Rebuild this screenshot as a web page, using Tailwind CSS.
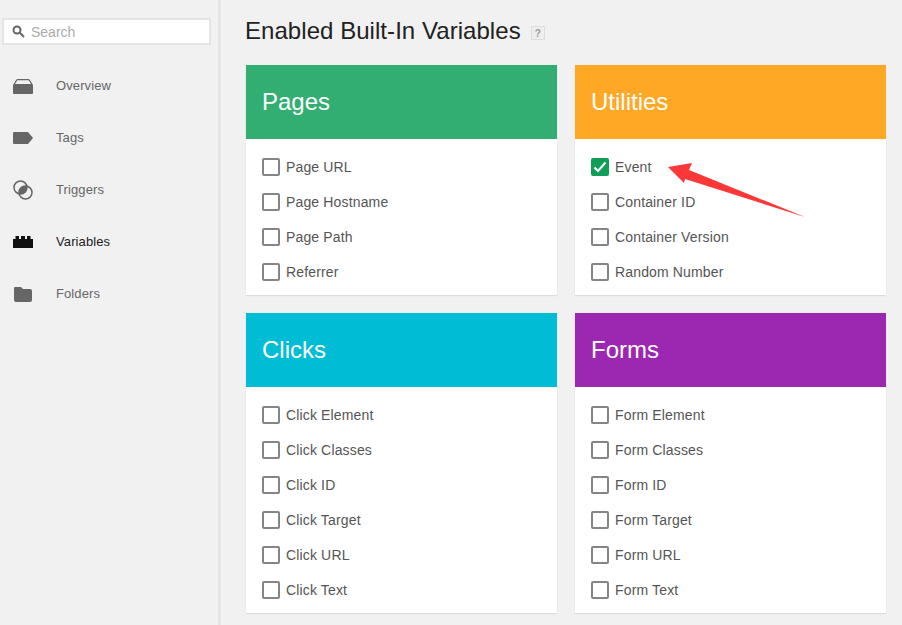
<!DOCTYPE html>
<html lang="en">
<head>
    <meta charset="UTF-8" />
    <title>Enabled Built-In Variables</title>
    <script src="https://cdn.jsdelivr.net/npm/@tailwindcss/browser@4"></script>
</head>
<body class="bg-[#f1f1f1] font-['Liberation_Sans',Arial,sans-serif] w-[902px] h-[625px] overflow-hidden relative">
    <div class="flex h-[625px]">
        <!-- sidebar -->
        <aside class="w-[221px] shrink-0 border-r-[3px] border-[#e5e5e5] pt-[18px] pl-[2px] pr-[7px]">
            <div class="h-[27px] bg-white border-2 border-[#e4e4e4] flex items-center pl-[8px] gap-[6px]">
                <svg width="13" height="13" viewBox="0 0 13 13" fill="none" stroke="#666" stroke-width="2"><circle cx="5" cy="5" r="3.5"/><path d="M7.8 7.8 12 12"/></svg>
                <span class="text-[14px] text-[#aaa] pt-px">Search</span>
            </div>
            <nav class="mt-[15px] -ml-[2px] text-[13px] text-[#666] tracking-[0.1px]">
                <a class="flex items-center h-[52px]">
                    <svg class="ml-[13px] mr-[23px]" width="20" height="15" viewBox="0 0 20 15"><path fill="#666" d="M0 6 3 1Q3.500 0 5 0H15Q16.500 0 17 1L20 6V14Q20 15 19 15H1Q0 15 0 14Z"/><path fill="#f1f1f1" d="M2 5 4.300 1.300H15.700L18 5Z"/></svg>
                    Overview
                </a>
                <a class="flex items-center h-[52px]">
                    <svg class="ml-[13px] mr-[23px]" width="20" height="12" viewBox="0 0 20 12"><path fill="#666" d="M0 1Q0 0 1 0H15L20 6 15 12H1Q0 12 0 11Z"/></svg>
                    Tags
                </a>
                <a class="flex items-center h-[52px]">
                    <svg class="ml-[13px] mr-[23px]" width="20" height="20" viewBox="0 0 20 20" fill="none" stroke="#666" stroke-width="1.500">
                        <clipPath id="lens"><circle cx="7.500" cy="7.500" r="6.500"/></clipPath>
                        <circle cx="12.500" cy="12.500" r="6.500" fill="#666" stroke="none" clip-path="url(#lens)"/>
                        <circle cx="7.500" cy="7.500" r="6.500"/>
                        <circle cx="12.500" cy="12.500" r="6.500"/>
                    </svg>
                    Triggers
                </a>
                <a class="flex items-center h-[52px] text-[#222]">
                    <svg class="ml-[13px] mr-[23px]" width="20" height="12" viewBox="0 0 20 12"><path fill="#111" d="M0 12V3H2.500V0H6V3H8V0H12V3H14V0H17.500V3H20V12Z"/></svg>
                    Variables
                </a>
                <a class="flex items-center h-[52px]">
                    <svg class="ml-[14px] mr-[24px]" width="18" height="15" viewBox="0 0 18 15"><path fill="#666" d="M1 0H7L9 2H16Q18 2 18 4V13Q18 15 16 15H2Q0 15 0 13V1Q0 0 1 0Z"/></svg>
                    Folders
                </a>
            </nav>
        </aside>

        <!-- main -->
        <main class="flex-1 pl-[25px] pr-[16px]">
            <div class="h-[65px] flex items-center gap-[10px] pb-[4px] -ml-px">
                <h1 class="text-[24px] text-[#212121] tracking-[0.05px]">Enabled Built-In Variables</h1>
                <span class="w-[14px] h-[14px] mt-[5px] border border-[#ddd] bg-[#eee] text-[10px] font-bold text-[#999] flex items-center justify-center">?</span>
            </div>
            <div class="grid grid-cols-[311px_311px] gap-x-[18px] gap-y-[18px]">
                <section class="bg-white shadow-[0_1px_1px_#dcdcdc,0_0_1px_#e0e0e0] h-[230px]">
                    <h2 class="h-[74px] bg-[#33ae72] text-white text-[24px] flex items-center pl-[16px]">Pages</h2>
                    <ul class="pt-[11px] pl-[16px] text-[14px] text-[#555] tracking-[0.15px]">
                        <li class="h-[35px] flex items-center gap-[6px]"><span class="w-[18px] h-[18px] mb-px border-2 border-[#858585] rounded-[2px]"></span>Page URL</li>
                        <li class="h-[35px] flex items-center gap-[6px]"><span class="w-[18px] h-[18px] mb-px border-2 border-[#858585] rounded-[2px]"></span>Page Hostname</li>
                        <li class="h-[35px] flex items-center gap-[6px]"><span class="w-[18px] h-[18px] mb-px border-2 border-[#858585] rounded-[2px]"></span>Page Path</li>
                        <li class="h-[35px] flex items-center gap-[6px]"><span class="w-[18px] h-[18px] mb-px border-2 border-[#858585] rounded-[2px]"></span>Referrer</li>
                    </ul>
                </section>
                <section class="bg-white shadow-[0_1px_1px_#dcdcdc,0_0_1px_#e0e0e0] h-[230px]">
                    <h2 class="h-[74px] bg-[#ffa826] text-white text-[24px] flex items-center pl-[16px]">Utilities</h2>
                    <ul class="pt-[11px] pl-[16px] text-[14px] text-[#555] tracking-[0.15px]">
                        <li class="h-[35px] flex items-center gap-[6px]">
                            <span class="w-[18px] h-[18px] mb-px bg-[#0f9d58] rounded-[2px] flex items-center justify-center">
                                <svg width="14" height="12" viewBox="0 0 14 12" fill="none" stroke="#fff" stroke-width="2"><path d="M1.500 6.500 5 10 12.500 1.500"/></svg>
                            </span>Event</li>
                        <li class="h-[35px] flex items-center gap-[6px]"><span class="w-[18px] h-[18px] mb-px border-2 border-[#858585] rounded-[2px]"></span>Container ID</li>
                        <li class="h-[35px] flex items-center gap-[6px]"><span class="w-[18px] h-[18px] mb-px border-2 border-[#858585] rounded-[2px]"></span>Container Version</li>
                        <li class="h-[35px] flex items-center gap-[6px]"><span class="w-[18px] h-[18px] mb-px border-2 border-[#858585] rounded-[2px]"></span>Random Number</li>
                    </ul>
                </section>
                <section class="bg-white shadow-[0_1px_1px_#dcdcdc,0_0_1px_#e0e0e0] h-[300px]">
                    <h2 class="h-[74px] bg-[#00bcd4] text-white text-[24px] flex items-center pl-[16px]">Clicks</h2>
                    <ul class="pt-[11px] pl-[16px] text-[14px] text-[#555] tracking-[0.15px]">
                        <li class="h-[35px] flex items-center gap-[6px]"><span class="w-[18px] h-[18px] mb-px border-2 border-[#858585] rounded-[2px]"></span>Click Element</li>
                        <li class="h-[35px] flex items-center gap-[6px]"><span class="w-[18px] h-[18px] mb-px border-2 border-[#858585] rounded-[2px]"></span>Click Classes</li>
                        <li class="h-[35px] flex items-center gap-[6px]"><span class="w-[18px] h-[18px] mb-px border-2 border-[#858585] rounded-[2px]"></span>Click ID</li>
                        <li class="h-[35px] flex items-center gap-[6px]"><span class="w-[18px] h-[18px] mb-px border-2 border-[#858585] rounded-[2px]"></span>Click Target</li>
                        <li class="h-[35px] flex items-center gap-[6px]"><span class="w-[18px] h-[18px] mb-px border-2 border-[#858585] rounded-[2px]"></span>Click URL</li>
                        <li class="h-[35px] flex items-center gap-[6px]"><span class="w-[18px] h-[18px] mb-px border-2 border-[#858585] rounded-[2px]"></span>Click Text</li>
                    </ul>
                </section>
                <section class="bg-white shadow-[0_1px_1px_#dcdcdc,0_0_1px_#e0e0e0] h-[300px]">
                    <h2 class="h-[74px] bg-[#9c27b0] text-white text-[24px] flex items-center pl-[16px]">Forms</h2>
                    <ul class="pt-[11px] pl-[16px] text-[14px] text-[#555] tracking-[0.15px]">
                        <li class="h-[35px] flex items-center gap-[6px]"><span class="w-[18px] h-[18px] mb-px border-2 border-[#858585] rounded-[2px]"></span>Form Element</li>
                        <li class="h-[35px] flex items-center gap-[6px]"><span class="w-[18px] h-[18px] mb-px border-2 border-[#858585] rounded-[2px]"></span>Form Classes</li>
                        <li class="h-[35px] flex items-center gap-[6px]"><span class="w-[18px] h-[18px] mb-px border-2 border-[#858585] rounded-[2px]"></span>Form ID</li>
                        <li class="h-[35px] flex items-center gap-[6px]"><span class="w-[18px] h-[18px] mb-px border-2 border-[#858585] rounded-[2px]"></span>Form Target</li>
                        <li class="h-[35px] flex items-center gap-[6px]"><span class="w-[18px] h-[18px] mb-px border-2 border-[#858585] rounded-[2px]"></span>Form URL</li>
                        <li class="h-[35px] flex items-center gap-[6px]"><span class="w-[18px] h-[18px] mb-px border-2 border-[#858585] rounded-[2px]"></span>Form Text</li>
                    </ul>
                </section>
            </div>
        </main>
    </div>

    <!-- red annotation arrow -->
    <svg class="absolute left-[660px] top-[155px]" width="150" height="70" viewBox="660 155 150 70">
        <path fill="#fb3838" d="M668 167 692 163 689 170 805 217 685 179 684 183Z"/>
    </svg>
</body>
</html>
